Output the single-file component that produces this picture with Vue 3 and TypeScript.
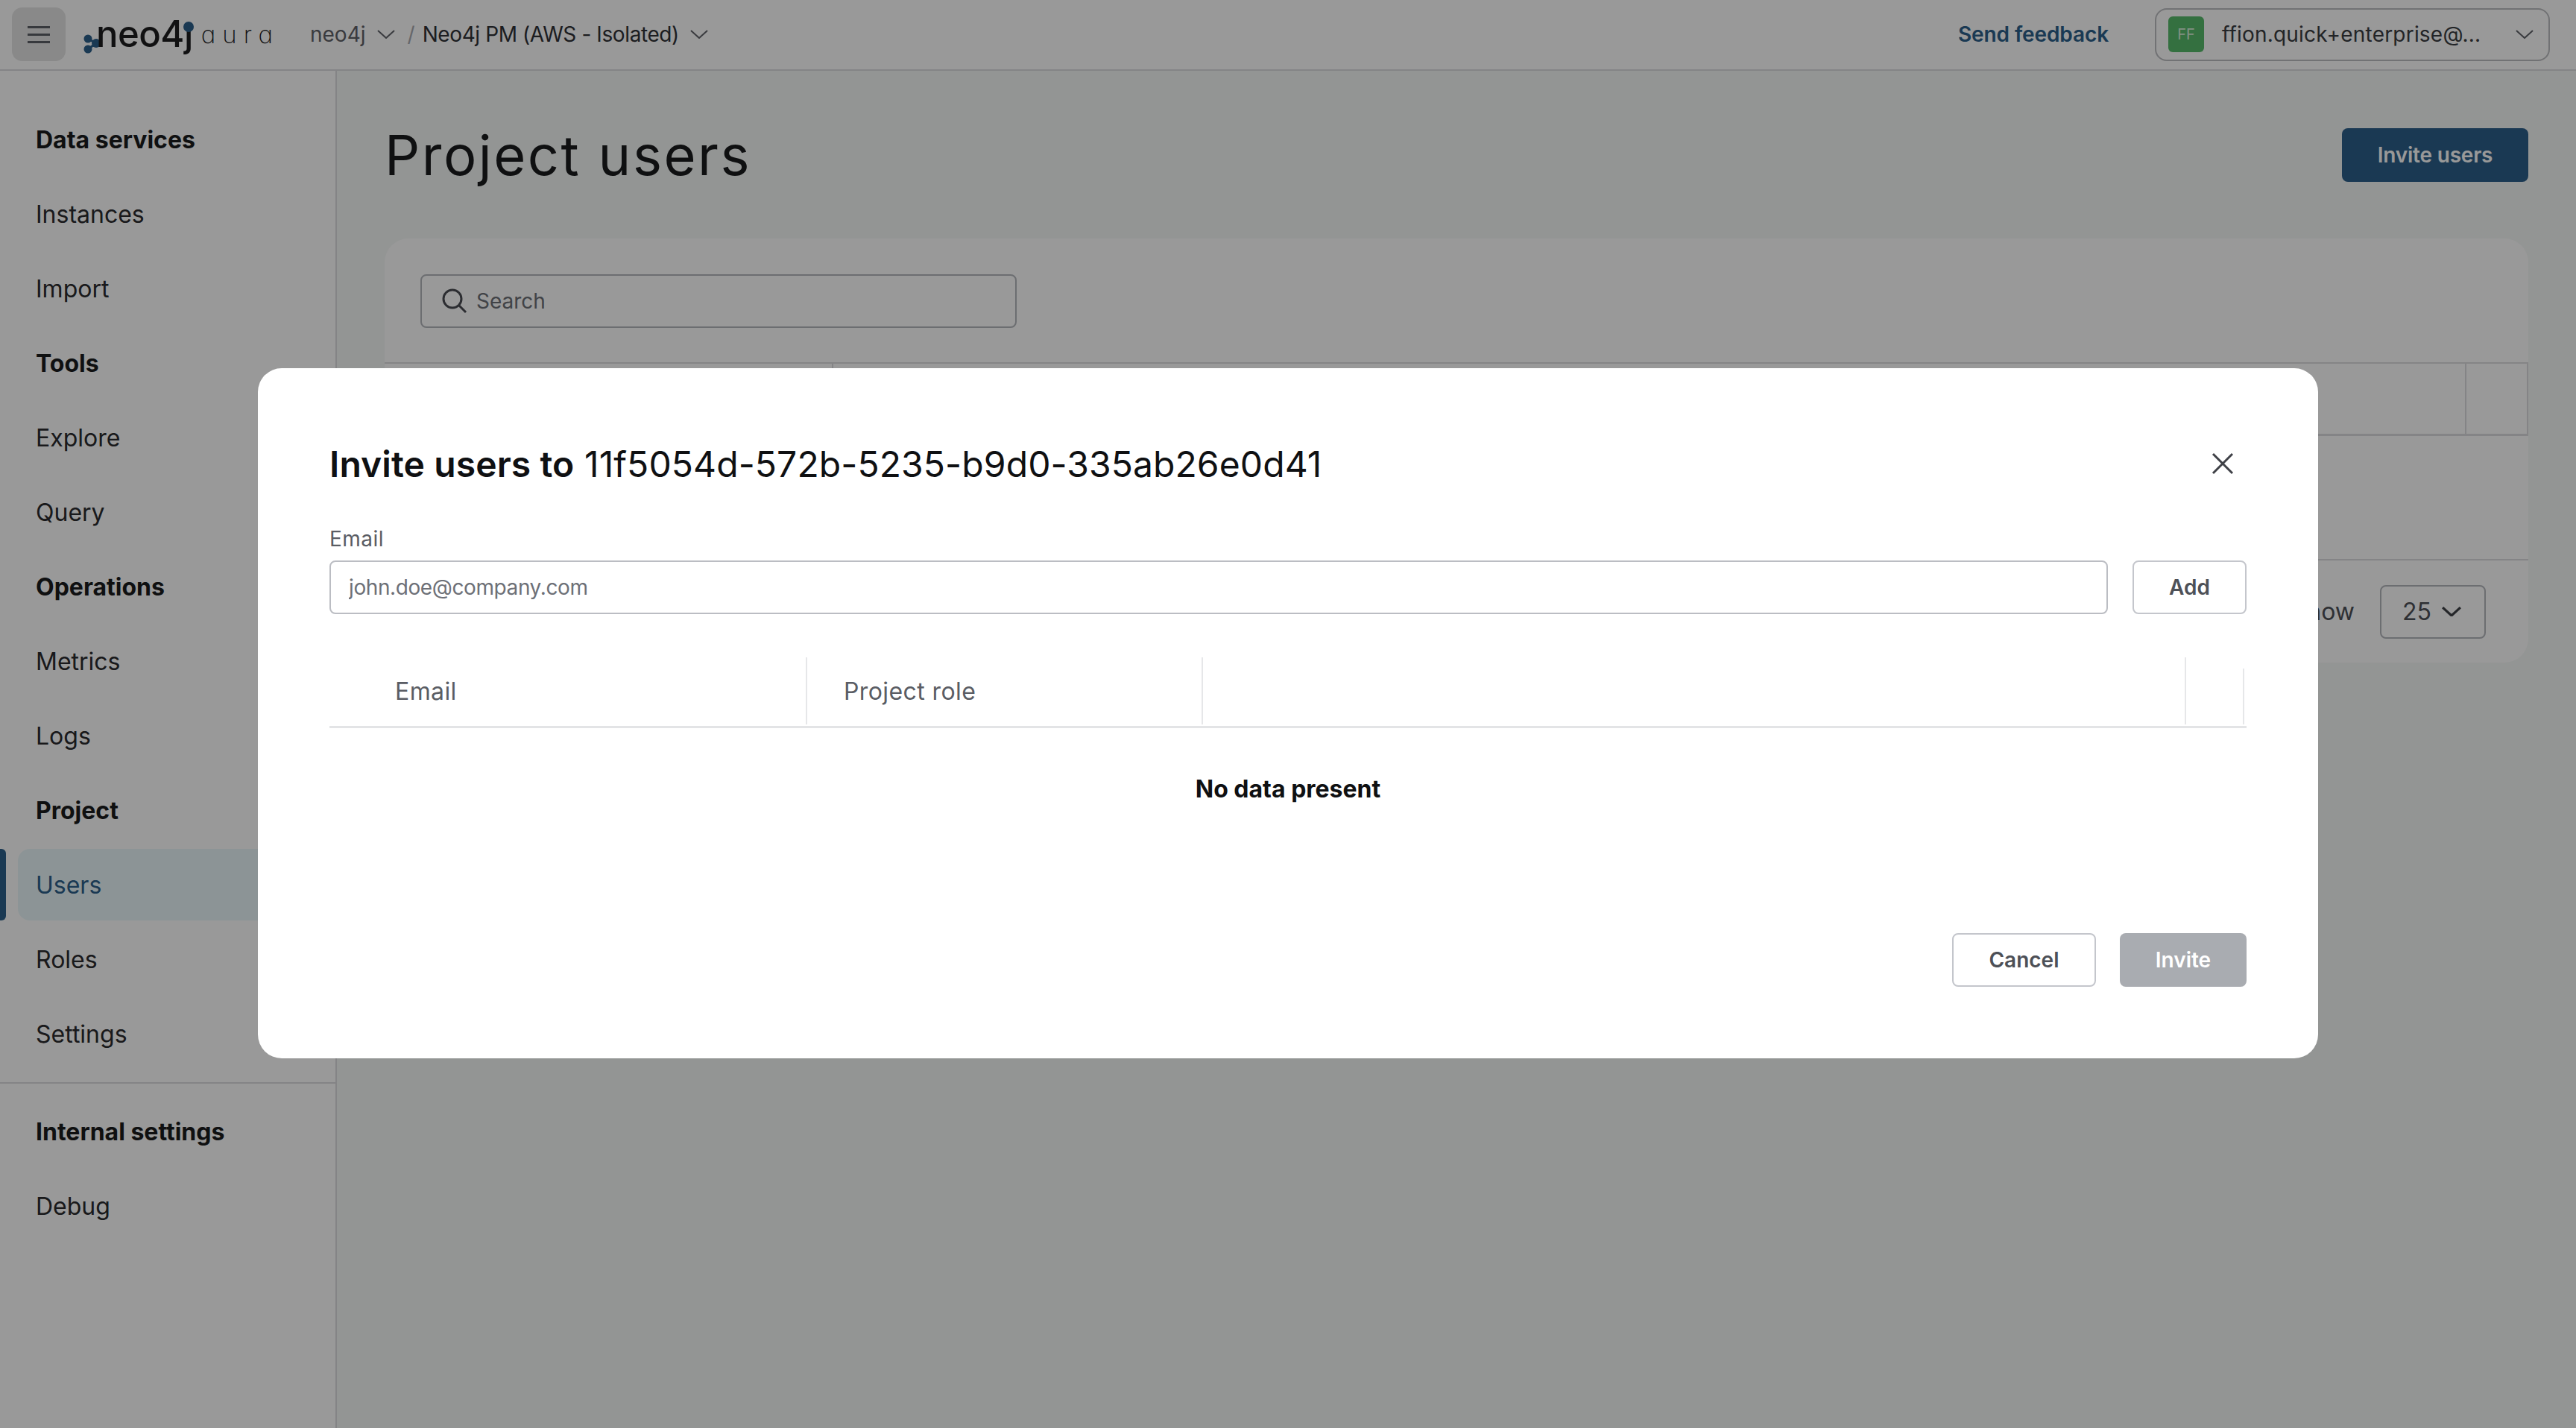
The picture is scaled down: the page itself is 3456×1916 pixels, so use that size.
<script setup lang="ts">
interface NavEntry {
  label: string
  heading?: boolean
  active?: boolean
}

const navItems: NavEntry[] = [
  { label: 'Data services', heading: true },
  { label: 'Instances' },
  { label: 'Import' },
  { label: 'Tools', heading: true },
  { label: 'Explore' },
  { label: 'Query' },
  { label: 'Operations', heading: true },
  { label: 'Metrics' },
  { label: 'Logs' },
  { label: 'Project', heading: true },
  { label: 'Users', active: true },
  { label: 'Roles' },
  { label: 'Settings' },
]

const internalItems: NavEntry[] = [
  { label: 'Internal settings', heading: true },
  { label: 'Debug' },
]
</script>

<template>
  <div class="page">
    <header class="topbar">
      <button class="menu-btn" type="button" aria-label="Menu">
        <span /><span /><span />
      </button>
      <div class="logo">
        <svg class="logo-mark" width="30" height="44" viewBox="0 0 30 44">
          <path d="M7 8 L18 14 L7 22" fill="none" stroke="#2c5f8a" stroke-width="3" />
          <circle cx="7" cy="8" r="5.5" fill="#2c5f8a" />
          <circle cx="18" cy="14" r="6" fill="#2c5f8a" />
          <circle cx="7" cy="22" r="5.5" fill="#2c5f8a" />
        </svg>
        <span class="logo-neo">neo4ȷ<i class="logo-dot" /></span>
        <span class="logo-aura">aura</span>
      </div>
      <nav class="crumbs">
        <span class="crumb-org">neo4j</span>
        <svg class="chev" viewBox="0 0 24 12"><path d="M1 1 L12 11 L23 1" /></svg>
        <span class="crumb-sep">/</span>
        <span class="crumb-project">Neo4j PM (AWS - Isolated)</span>
        <svg class="chev" viewBox="0 0 24 12"><path d="M1 1 L12 11 L23 1" /></svg>
      </nav>
      <a class="feedback">Send feedback</a>
      <div class="user-btn">
        <span class="avatar">FF</span>
        <span class="user-mail">ffion.quick+enterprise@...</span>
        <svg class="chev user-chev" viewBox="0 0 24 12"><path d="M1 1 L12 11 L23 1" /></svg>
      </div>
    </header>

    <div class="body">
      <aside class="sidebar">
        <ul class="nav nav-main">
          <li
            v-for="item in navItems"
            :key="item.label"
            class="nav-item"
            :class="{ 'is-heading': item.heading, 'is-active': item.active }"
          >
            {{ item.label }}
          </li>
        </ul>
        <ul class="nav nav-internal">
          <li
            v-for="item in internalItems"
            :key="item.label"
            class="nav-item"
            :class="{ 'is-heading': item.heading }"
          >
            {{ item.label }}
          </li>
        </ul>
      </aside>

      <main class="content">
        <div class="content-head">
          <h1 class="page-title">Project users</h1>
          <button class="btn btn-primary" type="button">Invite users</button>
        </div>
        <section class="card">
          <div class="card-search">
            <div class="search-box">
              <svg width="36" height="36" viewBox="0 0 36 36" fill="none" stroke="#4a4c52" stroke-width="3">
                <circle cx="15" cy="15" r="12" />
                <path d="M24 24 L33 33" />
              </svg>
              <span class="search-text">Search</span>
            </div>
          </div>
          <div class="card-head">
            <span class="card-col card-col-a" />
            <span class="card-col card-col-b" />
            <span class="card-col card-col-c" />
          </div>
          <div class="card-rows" />
          <div class="card-foot">
            <span class="show-label">Show</span>
            <div class="page-size">
              <span>25</span>
              <svg class="size-chev" viewBox="0 0 24 12"><path d="M1 1 L12 11 L23 1" /></svg>
            </div>
          </div>
        </section>
      </main>
    </div>

    <div class="overlay">
      <div class="modal">
        <div class="modal-title-row">
          <h2 class="modal-title"><strong>Invite users to</strong> 11f5054d-572b-5235-b9d0-335ab26e0d41</h2>
          <svg class="close" width="30" height="30" viewBox="0 0 30 30" fill="none" stroke="#3f4147" stroke-width="3">
            <path d="M2 2 L28 28 M28 2 L2 28" />
          </svg>
        </div>

        <label class="field-label" for="invite-email">Email</label>
        <div class="field-row">
          <input id="invite-email" class="field-input" type="text" placeholder="john.doe@company.com">
          <button class="btn btn-outline btn-add" type="button">Add</button>
        </div>

        <div class="invite-table">
          <div class="invite-cell invite-email">Email</div>
          <div class="invite-cell invite-role">Project role</div>
          <div class="invite-cell invite-blank" />
          <div class="invite-cell invite-short" />
        </div>
        <div class="no-data">No data present</div>

        <div class="modal-actions">
          <button class="btn btn-outline btn-cancel" type="button">Cancel</button>
          <button class="btn btn-disabled" type="button">Invite</button>
        </div>
      </div>
    </div>
  </div>
</template>

<style>
html,
body {
  margin: 0;
  background: #f5f8f7;
}
</style>

<style scoped>
.page {
  position: relative;
  width: 3456px;
  height: 1916px;
  overflow: hidden;
  font-family: "Inter", "Noto Sans", sans-serif;
  color: #1a1b1d;
  background: #f5f8f7;
}

.topbar {
  display: flex;
  align-items: center;
  height: 95px;
  box-sizing: border-box;
  padding: 0 35px 1px 16px;
  background: #fff;
  border-bottom: 2px solid #dcdde0;
}

.menu-btn {
  display: flex;
  flex-direction: column;
  align-items: center;
  justify-content: center;
  gap: 7px;
  width: 72px;
  height: 72px;
  padding: 0;
  border: 0;
  border-radius: 14px;
  background: #e4e4e4;
}

.menu-btn span {
  width: 30px;
  height: 3px;
  background: #5d6066;
}

.logo {
  display: flex;
  align-items: center;
  margin-left: 22px;
  width: 306px;
  height: 72px;
}

.logo-mark {
  flex: none;
  margin: 40px -12px 0 1px;
}

.logo-neo {
  position: relative;
  font-size: 49px;
  font-weight: 500;
  line-height: 72px;
  letter-spacing: -0.5px;
  color: #1d1d1f;
}

.logo-dot {
  position: absolute;
  top: 19px;
  right: -1px;
  width: 14px;
  height: 14px;
  border-radius: 50%;
  background: #2c5f8a;
}

.logo-aura {
  margin-left: 11px;
  font-size: 33px;
  font-weight: 200;
  letter-spacing: 9px;
  font-feature-settings: "cv11";
  color: #1d1d1f;
}

.crumbs {
  display: flex;
  align-items: center;
  font-size: 28px;
  line-height: 40px;
}

.crumb-org {
  color: #5f6268;
}

.chev {
  width: 24px;
  height: 12px;
  margin-left: 15px;
  fill: none;
  stroke: #5f6268;
  stroke-width: 2;
}

.crumb-sep {
  margin: 0 10px 0 17px;
  color: #a9abb0;
}

.crumb-project {
  letter-spacing: -0.4px;
  color: #2f3136;
}

.feedback {
  margin-left: auto;
  font-size: 28px;
  font-weight: 600;
  letter-spacing: -0.1px;
  color: #2c5f8a;
}

.user-btn {
  display: flex;
  align-items: center;
  box-sizing: border-box;
  width: 530px;
  height: 71px;
  margin-left: 62px;
  padding: 0 20px 0 16px;
  border: 2px solid #bdbec2;
  border-radius: 16px;
}

.avatar {
  display: flex;
  align-items: center;
  justify-content: center;
  width: 48px;
  height: 48px;
  border-radius: 6px;
  font-size: 20px;
  color: #d8f0dc;
  background: #58bb6b;
}

.user-mail {
  margin-left: 24px;
  font-size: 28px;
  letter-spacing: 0.2px;
  color: #3a3c41;
}

.user-chev {
  margin-left: auto;
}

.body {
  display: flex;
  height: 1821px;
}

.sidebar {
  flex: none;
  width: 452px;
  box-sizing: border-box;
  background: #fff;
  border-right: 2px solid #dcdde0;
}

.nav {
  margin: 0;
  padding: 0;
  list-style: none;
}

.nav-main {
  padding: 44px 0 17px;
  border-bottom: 2px solid #dcdde0;
}

.nav-internal {
  padding-top: 16px;
}

.nav-item {
  position: relative;
  display: flex;
  align-items: center;
  height: 96px;
  margin-bottom: 4px;
  margin-left: 24px;
  padding-left: 24px;
  font-size: 32px;
  border-radius: 16px;
  color: #2a2b2e;
}

.nav-main .nav-item:last-child {
  margin-bottom: 0;
}

.is-heading {
  font-weight: 700;
  color: #1a1b1d;
}

.is-active {
  color: #2c5f8a;
  background: #e9f7fa;
}

.is-active::before {
  content: "";
  position: absolute;
  left: -24px;
  top: 0;
  bottom: 0;
  width: 8px;
  border-radius: 0 6px 6px 0;
  background: #2c5f8a;
}

.content {
  flex: 1;
  min-width: 0;
  padding: 0 64px 0 64px;
}

.content-head {
  display: flex;
  align-items: center;
  justify-content: space-between;
  height: 225px;
}

.page-title {
  margin: 0;
  font-size: 74px;
  font-weight: 400;
  letter-spacing: 2.5px;
}

.btn {
  font-family: inherit;
  font-size: 28px;
  font-weight: 600;
  height: 72px;
  border-radius: 8px;
  box-sizing: border-box;
  padding: 0;
}

.btn-primary {
  width: 250px;
  border: 0;
  letter-spacing: -0.2px;
  color: #fff;
  background: #2c5f8a;
}

.btn-outline {
  border: 2px solid #c4c6cc;
  color: #4d5057;
  background: #fff;
}

.btn-disabled {
  width: 170px;
  border: 0;
  color: #fff;
  background: #a9acb1;
}

.card {
  border-radius: 32px;
  background: #fff;
}

.card-search {
  padding: 48px;
  height: 168px;
  box-sizing: border-box;
  border-bottom: 2px solid #dcdde0;
}

.search-box {
  display: flex;
  align-items: center;
  box-sizing: border-box;
  width: 800px;
  height: 72px;
  padding-left: 26px;
  border: 2px solid #b5b7bd;
  border-radius: 8px;
}

.search-text {
  margin-left: 11px;
  font-size: 28px;
  color: #6d7077;
}

.card-head {
  display: flex;
  height: 97px;
  box-sizing: border-box;
  border-bottom: 3px solid #dcdde0;
}

.card-col {
  border-right: 2px solid #dcdde0;
}

.card-col-a {
  width: 601px;
}

.card-col-b {
  width: 2191px;
}

.card-col-c {
  width: 81px;
}

.card-rows {
  height: 165px;
  border-bottom: 2px solid #dcdde0;
}

.card-foot {
  display: flex;
  align-items: center;
  justify-content: flex-end;
  gap: 34px;
  height: 137px;
  padding-right: 57px;
  box-sizing: border-box;
  font-size: 32px;
}

.page-size {
  display: flex;
  align-items: center;
  gap: 14px;
  width: 142px;
  height: 72px;
  box-sizing: border-box;
  padding-left: 28px;
  border: 2px solid #b5b7bd;
  border-radius: 8px;
  color: #4d5057;
}

.size-chev {
  width: 26px;
  height: 13px;
  fill: none;
  stroke: #3f4147;
  stroke-width: 3;
}

.show-label {
  color: #4d5057;
}

.overlay {
  position: absolute;
  inset: 0;
  display: flex;
  align-items: center;
  justify-content: center;
  background: rgba(0, 0, 0, 0.4);
}

.modal {
  display: flex;
  flex-direction: column;
  box-sizing: border-box;
  width: 2764px;
  height: 926px;
  margin-bottom: 2px;
  padding: 98px 96px 96px;
  border-radius: 32px;
  background: #fff;
}

.modal-title-row {
  display: flex;
  align-items: center;
  justify-content: space-between;
  height: 60px;
}

.modal-title {
  margin: 0;
  font-size: 48px;
  font-weight: 400;
  letter-spacing: 0.1px;
  color: #0f1012;
}

.modal-title strong {
  font-weight: 600;
}

.close {
  margin-right: 17px;
}

.field-label {
  margin-top: 51px;
  font-size: 28px;
  line-height: 40px;
  letter-spacing: 0.5px;
  color: #5a5d64;
}

.field-row {
  display: flex;
  gap: 33px;
  margin-top: 9px;
}

.field-input {
  flex: 1;
  height: 72px;
  box-sizing: border-box;
  padding: 0 24px;
  font-family: inherit;
  font-size: 28px;
  letter-spacing: -0.4px;
  border: 2px solid #bbbdc3;
  border-radius: 8px;
  outline: none;
}

.field-input::placeholder {
  color: #6d7077;
}

.btn-add {
  width: 153px;
}

.btn-cancel {
  width: 193px;
}

.invite-table {
  display: grid;
  grid-template-columns: 641px 531px 1319px 78px;
  height: 92px;
  margin-top: 58px;
  border-bottom: 3px solid #e3e4e6;
  font-size: 32px;
  letter-spacing: 0.4px;
  color: #5a5d64;
}

.invite-cell {
  display: flex;
  align-items: center;
  box-sizing: border-box;
  height: 90px;
  border-right: 2px solid #e6e7e9;
}

.invite-email {
  padding-left: 88px;
}

.invite-role {
  padding-left: 49px;
}

.invite-short {
  height: 75px;
  margin-top: 15px;
}

.no-data {
  margin-top: 58px;
  font-size: 32px;
  font-weight: 700;
  line-height: 48px;
  text-align: center;
  color: #0f1012;
}

.modal-actions {
  display: flex;
  justify-content: flex-end;
  gap: 32px;
  margin-top: auto;
}
</style>
